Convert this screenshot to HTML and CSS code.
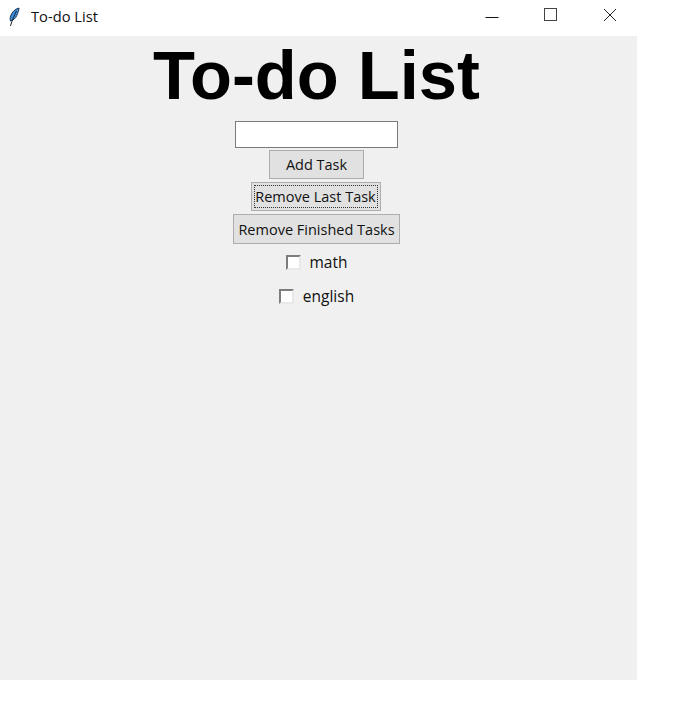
FILE: index.html
```html
<!DOCTYPE html>
<html lang="en">
<head>
<meta charset="utf-8">
<title>To-do List</title>
<link rel="stylesheet" href="styles.css">
</head>
<body>
<div class="window">
  <header class="titlebar">
    <svg class="feather" width="14" height="22" viewBox="0 0 14 22" aria-hidden="true">
      <path d="M12 2 C8 3 5 6 3.600 10 C3 12 3 13.500 3.400 15 C6 14.500 8.500 12.500 9.800 9.500 C11 6.500 12 4 12 2 Z" fill="#3b8fdc" stroke="#24344e" stroke-width="1"/>
      <path d="M9.500 5 C7.500 9 5 14 3.500 20" fill="none" stroke="#1b2230" stroke-width="1"/>
    </svg>
    <span class="wintitle">To-do List</span>
    <div class="controls">
      <svg class="ctl ctl-min" width="14" height="12" viewBox="0 0 14 12" aria-hidden="true"><path d="M0.500 8.500H13.500" stroke="#111" fill="none"/></svg>
      <svg class="ctl ctl-max" width="14" height="14" viewBox="0 0 14 14" aria-hidden="true"><rect x="1.500" y="0.500" width="12" height="12" stroke="#444" fill="none"/></svg>
      <svg class="ctl ctl-close" width="14" height="14" viewBox="0 0 14 14" aria-hidden="true"><path d="M1 1L13 13M13 1L1 13" stroke="#222" fill="none"/></svg>
    </div>
  </header>
  <main class="client">
    <h1 class="heading">To-do List</h1>
    <input class="entry" type="text" aria-label="New task">
    <button class="btn btn-add" type="button">Add Task</button>
    <button class="btn btn-last" type="button"><span class="focus">Remove Last Task</span></button>
    <button class="btn btn-finished" type="button">Remove Finished Tasks</button>
    <label class="check check-first"><span class="box"></span><span>math</span></label>
    <label class="check"><span class="box"></span><span>english</span></label>
  </main>
</div>
</body>
</html>
```
FILE: styles.css
```css
html, body {
  margin: 0;
  padding: 0;
  background: #fff;
}
body {
  font-family: "Open Sans", "Noto Sans", sans-serif;
  color: #111;
}
.window {
  width: 637px;
  height: 680px;
  display: flex;
  flex-direction: column;
}
.titlebar {
  height: 36px;
  flex: none;
  display: flex;
  align-items: center;
  background: #fff;
  padding-left: 7px;
  box-sizing: border-box;
}
.feather {
  flex: none;
  margin-top: -2px;
}
.wintitle {
  margin-left: 10px;
  font-size: 14.7px;
  color: #111;
  margin-top: -4px;
}
.controls {
  margin-left: auto;
  display: flex;
  align-items: center;
  margin-top: -6px;
  margin-right: 20px;
}
.ctl {
  flex: none;
}
.ctl-max {
  margin-left: 44px;
}
.ctl-close {
  margin-left: 46px;
}
.client {
  flex: 1;
  background: #f0f0f0;
  display: flex;
  flex-direction: column;
  align-items: center;
  padding-right: 4px;
}
.heading {
  margin: 0;
  font-family: "Liberation Sans", Arial, sans-serif;
  font-weight: 700;
  font-size: 68.700px;
  line-height: 80px;
  height: 85px;
  color: #000;
}
.entry {
  width: 163px;
  height: 27px;
  box-sizing: border-box;
  border: 1px solid #7a7a7a;
  background: #fff;
  padding: 0;
  margin: 0;
  display: block;
}
.btn {
  display: block;
  box-sizing: border-box;
  margin: 0;
  padding: 0;
  border: 1px solid #adadad;
  background: #e1e1e1;
  font-family: "Open Sans", "Noto Sans", sans-serif;
  font-size: 14.5px;
  color: #111;
  white-space: nowrap;
}
.btn-add {
  width: 95px;
  height: 29px;
  margin-top: 2px;
}
.btn-last {
  width: 130px;
  height: 29px;
  margin-top: 3px;
  margin-right: 2px;
  padding: 2px;
}
.focus {
  display: flex;
  height: 100%;
  align-items: center;
  justify-content: center;
  box-sizing: border-box;
  border: 1px dotted #333;
}
.btn-finished {
  width: 167px;
  height: 30px;
  margin-top: 3px;
}
.check {
  display: flex;
  align-items: center;
  gap: 9px;
  height: 18px;
  font-size: 15.500px;
  margin-top: 9px;
  color: #111;
}
.check + .check {
  margin-top: 16px;
}
.box {
  width: 15px;
  height: 15px;
  box-sizing: border-box;
  background: #fff;
  border: 2px solid #e8e8e8;
  border-top-color: #7d7d7d;
  border-left-color: #7d7d7d;
}
```
